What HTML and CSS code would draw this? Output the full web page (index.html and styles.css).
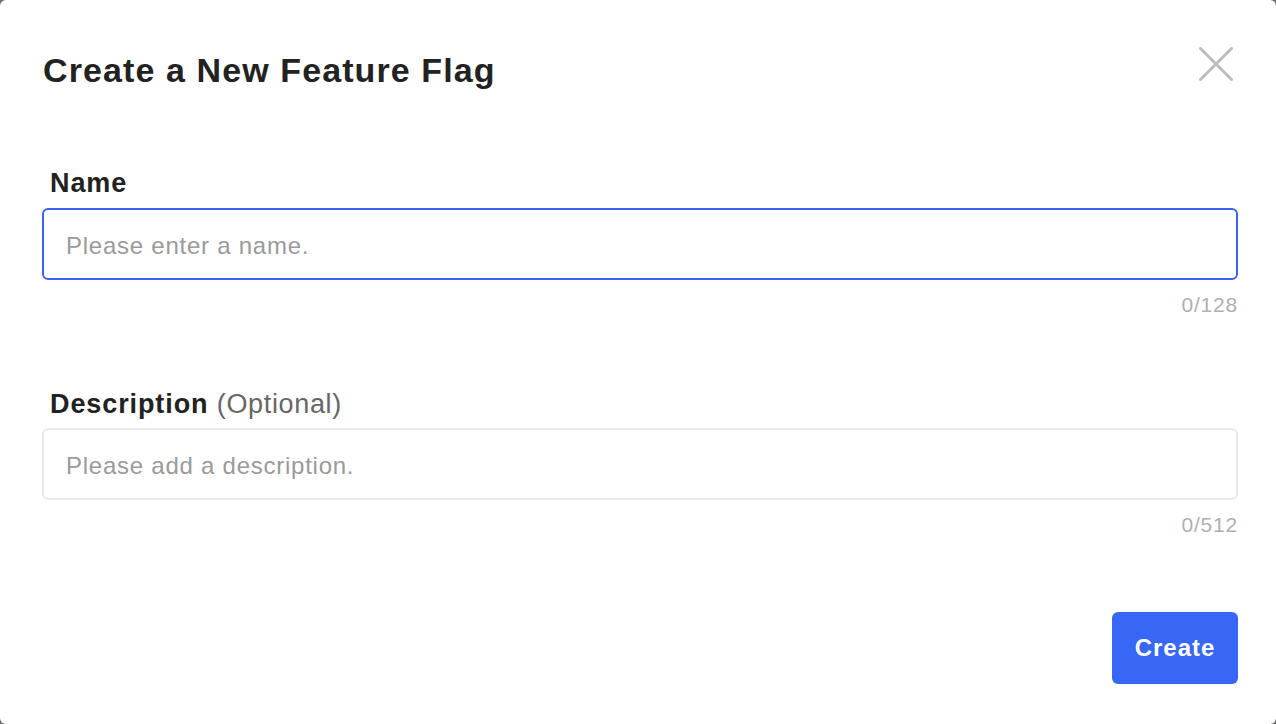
FILE: index.html
```html
<!DOCTYPE html>
<html lang="en">
<head>
<meta charset="utf-8">
<title>Create a New Feature Flag</title>
<link rel="stylesheet" href="styles.css">
</head>
<body>
<div class="modal">
  <div class="modal-header">
    <h1 class="modal-title">Create a New Feature Flag</h1>
    <button class="close-btn" aria-label="Close">
      <svg width="34" height="34" viewBox="0 0 34 34"><path d="M1.5 1.5 L32.5 32.5 M32.5 1.5 L1.5 32.5" stroke="#bdbdbd" stroke-width="3" stroke-linecap="round" fill="none"/></svg>
    </button>
  </div>
  <div class="field field-name">
    <label class="field-label">Name</label>
    <input class="field-input focused" type="text" placeholder="Please enter a name.">
    <div class="counter">0/128</div>
  </div>
  <div class="field field-desc">
    <label class="field-label">Description <span class="optional">(Optional)</span></label>
    <input class="field-input" type="text" placeholder="Please add a description.">
    <div class="counter">0/512</div>
  </div>
  <div class="modal-footer">
    <button class="create-btn">Create</button>
  </div>
</div>
</body>
</html>
```
FILE: styles.css
```css
html, body {
  margin: 0;
  padding: 0;
  height: 100%;
}
body {
  background: #6f6f6f;
  font-family: "Liberation Sans", Arial, sans-serif;
}
.modal {
  box-sizing: border-box;
  width: 1276px;
  height: 724px;
  background: #ffffff;
  border-radius: 6px;
  padding: 47px 38px 0 42px;
  display: flex;
  flex-direction: column;
}
.modal-header {
  display: flex;
  justify-content: space-between;
  align-items: flex-start;
}
.modal-title {
  margin: 3px 0 0 1px;
  font-size: 34px;
  line-height: 40px;
  font-weight: 700;
  color: #222222;
  letter-spacing: 1.1px;
}
.close-btn {
  margin: 0 5px 0 0;
  padding: 0;
  border: 0;
  background: transparent;
  width: 34px;
  height: 34px;
  display: block;
  cursor: pointer;
}
.close-btn svg {
  display: block;
}
.field {
  display: flex;
  flex-direction: column;
}
.field-name {
  margin-top: 77px;
}
.field-desc {
  margin-top: 71px;
}
.field-label {
  padding-left: 8px;
  font-size: 27px;
  line-height: 32px;
  font-weight: 700;
  color: #222222;
  letter-spacing: 0.9px;
  margin-bottom: 9px;
}
.field-desc .field-label {
  margin-bottom: 8px;
}
.optional {
  font-weight: 400;
  color: #666666;
  letter-spacing: 0.65px;
}
.field-input {
  box-sizing: border-box;
  width: 100%;
  height: 72px;
  margin: 0;
  padding: 3px 20px 0 22px;
  border: 2px solid #e9e9e9;
  border-radius: 6px;
  font-family: "Liberation Sans", Arial, sans-serif;
  font-size: 24px;
  letter-spacing: 0.75px;
  color: #222222;
  background: #ffffff;
  outline: none;
}
.field-input.focused {
  border-color: #3a66ef;
}
.field-input::placeholder {
  color: #9a9a9a;
}
.counter {
  margin-top: 13px;
  text-align: right;
  font-size: 21px;
  line-height: 24px;
  color: #b0b0b0;
  letter-spacing: 0.8px;
}
.modal-footer {
  margin-top: 75px;
  display: flex;
  justify-content: flex-end;
}
.create-btn {
  width: 126px;
  height: 72px;
  border: 0;
  border-radius: 6px;
  background: #3867f6;
  color: #ffffff;
  font-family: "Liberation Sans", Arial, sans-serif;
  font-size: 24px;
  font-weight: 700;
  letter-spacing: 1px;
  padding: 0;
  cursor: pointer;
}
```
